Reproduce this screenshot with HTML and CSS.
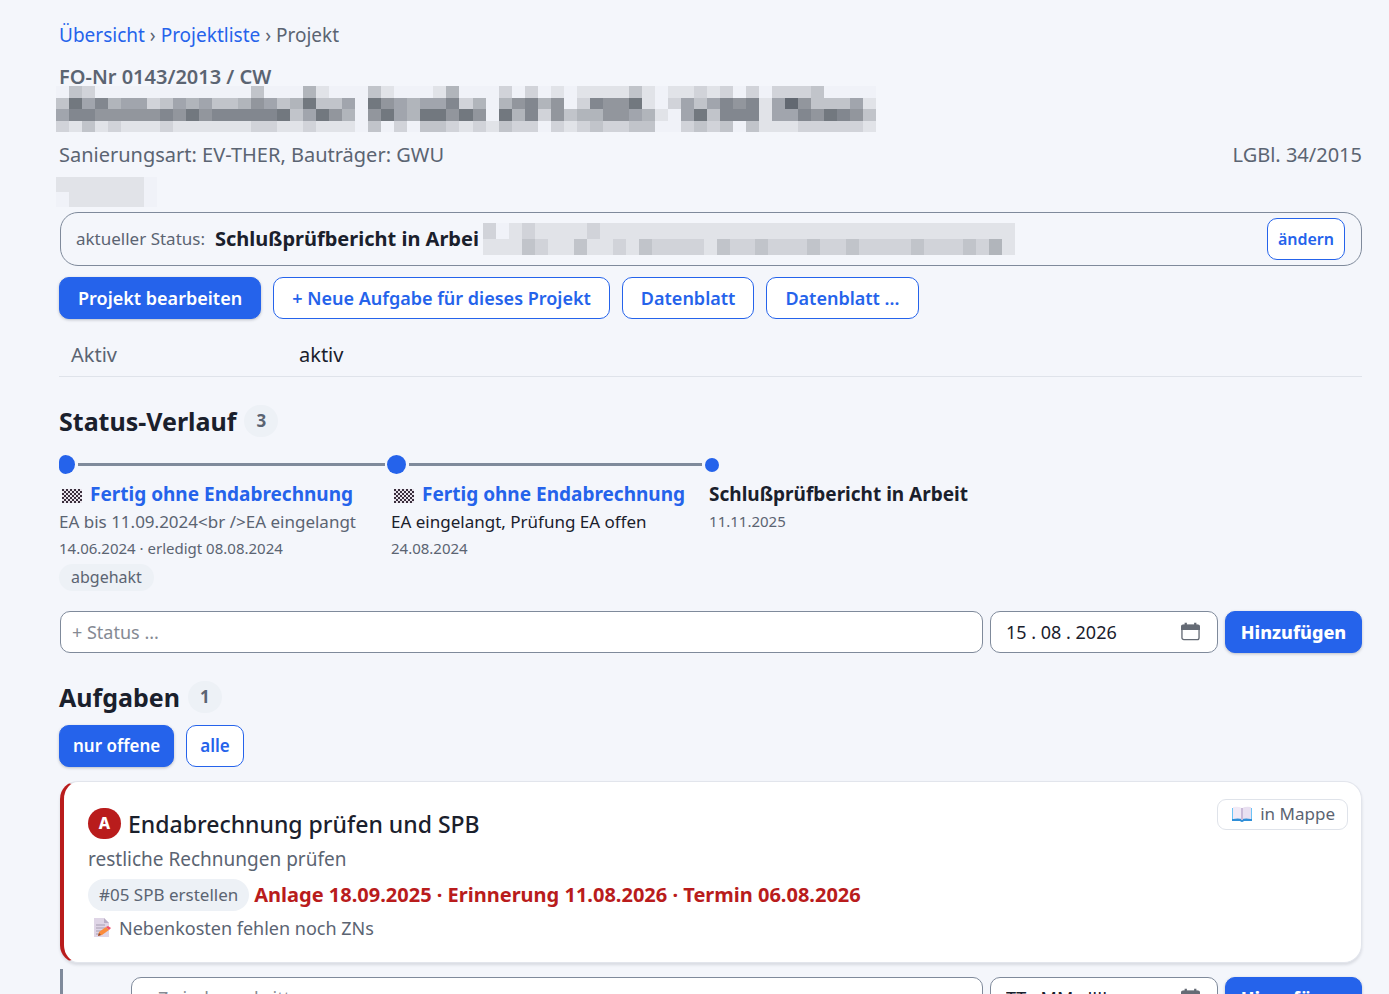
FILE: index.html
```html
<!DOCTYPE html>
<html lang="de">
<head>
  <meta charset="UTF-8">
  <meta name="viewport" content="width=device-width, initial-scale=1.0">
  <title>Projekt</title>
  <link rel="stylesheet" href="styles.css">
</head>
<body>
<main class="page">

  <nav class="breadcrumb">
    <a href="#">Übersicht</a> › <a href="#">Projektliste</a> › <span>Projekt</span>
  </nav>

  <!-- Projektkopf -->
  <header class="project-head">
    <div class="fo-nr">FO-Nr 0143/2013 / CW</div>
    <svg class="mask mask-title" data-rows="032000000000000300041000310001400020201011113101121202022230000 385745523545334653483350865455724046746027668102535767159633351 577666667686777778358640685488686084726344665410583777155768763 213121112111111221121110302033212132202123223300232303111222221"></svg>
    <div class="meta">
      <span>Sanierungsart: EV-THER, Bauträger: GWU</span>
      <span>LGBl. 34/2015</span>
    </div>
    <svg class="mask mask-short" data-rows="11111110 01111110"></svg>
  </header>

  <!-- Aktueller Status -->
  <section class="status-box">
    <span class="status-label">aktueller Status:</span>
    <strong class="status-text">Schlußprüfbericht in Arbei</strong>
    <svg class="mask mask-status" data-rows="20121111211111111111111111111111111111111 11132113112132222132232223223222232223241"></svg>
    <button class="btn btn-small" type="button">ändern</button>
  </section>

  <div class="actions">
    <button class="btn btn-primary" type="button">Projekt bearbeiten</button>
    <button class="btn" type="button">+ Neue Aufgabe für dieses Projekt</button>
    <button class="btn" type="button">Datenblatt</button>
    <button class="btn" type="button">Datenblatt ...</button>
  </div>

  <table class="facts">
    <tr><th>Aktiv</th><td>aktiv</td></tr>
  </table>

  <!-- Status-Verlauf -->
  <section>
    <h2>Status-Verlauf <span class="count">3</span></h2>
    <ol class="timeline">
      <li class="step step-first">
        <div class="track"><i class="dot"></i></div>
        <a class="step-title" href="#"><svg class="flag" viewBox="0 0 20 14"><use href="#checker"/></svg>Fertig ohne Endabrechnung</a>
        <div class="step-note muted">EA bis 11.09.2024&lt;br /&gt;EA eingelangt</div>
        <div class="step-date">14.06.2024 · erledigt 08.08.2024</div>
        <span class="tag">abgehakt</span>
      </li>
      <li class="step">
        <div class="track"><i class="dot"></i></div>
        <a class="step-title" href="#"><svg class="flag" viewBox="0 0 20 14"><use href="#checker"/></svg>Fertig ohne Endabrechnung</a>
        <div class="step-note">EA eingelangt, Prüfung EA offen</div>
        <div class="step-date">24.08.2024</div>
      </li>
      <li class="step step-last">
        <div class="track"><i class="dot"></i></div>
        <div class="step-title">Schlußprüfbericht in Arbeit</div>
        <div class="step-date">11.11.2025</div>
      </li>
    </ol>

    <form class="add-row">
      <input class="field" type="text" aria-label="Status" placeholder="+ Status ...">
      <label class="date-field">
        <input type="text" aria-label="Datum" value="15 . 08 . 2026">
        <svg viewBox="0 0 20 20"><use href="#calendar"/></svg>
      </label>
      <button class="btn btn-primary btn-add" type="button">Hinzufügen</button>
    </form>
  </section>

  <!-- Aufgaben -->
  <section>
    <h2>Aufgaben <span class="count">1</span></h2>
    <div class="filters">
      <button class="btn btn-primary" type="button">nur offene</button>
      <button class="btn" type="button">alle</button>
    </div>

    <article class="task">
      <div class="task-body">
        <h3><span class="prio">A</span>Endabrechnung prüfen und SPB</h3>
        <p class="task-text">restliche Rechnungen prüfen</p>
        <p class="task-dates"><span class="tag tag-large">#05 SPB erstellen</span><strong>Anlage 18.09.2025 · Erinnerung 11.08.2026 · Termin 06.08.2026</strong></p>
        <p class="task-memo">
          <svg viewBox="0 0 18 20">
            <path d="M1 0h10l5 5v14H1z" fill="#dfd5e6"/>
            <path d="M11 0l5 5h-5z" fill="#b9adc4"/>
            <path d="M3 7h9M3 10h9M3 13h7M3 16h3" stroke="#a79eb2"/>
            <path d="M5 18l1-4 7-5 3 3-7 5z" fill="#fb8c3c"/>
            <path d="M13 9l2-1 3 2-2 2z" fill="#f0506a"/>
            <path d="M5 18l1-3 2 2z" fill="#8a4b3a"/>
          </svg>
          Nebenkosten fehlen noch ZNs
        </p>
      </div>
      <button class="folder" type="button">
        <svg viewBox="0 0 20 16">
          <path d="M0 2h20v13h-8q-2 2-4 0H0z" fill="#2f8fd8"/>
          <path d="M0 2h2v11H0zM18 2h2v11h-2z" fill="#6cc3f5"/>
          <path d="M1 1q5-1 9 1v11q-4-1-9 0z" fill="#f1eaf6"/>
          <path d="M19 1q-5-1-9 1v11q4-1 9 0z" fill="#e9e0f1"/>
          <path d="M10 2v12" stroke="#c9bad8" stroke-width="2"/>
        </svg>
        in Mappe
      </button>
    </article>

    <form class="add-row subtask">
      <input class="field" type="text" aria-label="Zwischenschritt" placeholder="+ Zwischenschritt ...">
      <label class="date-field">
        <input type="text" aria-label="Datum" value="TT . MM . JJJJ">
        <svg viewBox="0 0 20 20"><use href="#calendar"/></svg>
      </label>
      <button class="btn btn-primary btn-add" type="button">Hinzufügen</button>
    </form>
  </section>
</main>

<svg class="sprite">
  <defs>
    <pattern id="check" width="4" height="4" patternUnits="userSpaceOnUse">
      <rect width="4" height="4" fill="#e9e4ec"/>
      <rect width="2" height="2" fill="#3a2f3d"/>
      <rect x="2" y="2" width="2" height="2" fill="#3a2f3d"/>
    </pattern>
    <symbol id="checker" viewBox="0 0 20 14">
      <rect width="20" height="14" fill="url(#check)"/>
    </symbol>
    <symbol id="calendar" viewBox="0 0 20 20">
      <rect x="1" y="3" width="18" height="15" rx="2" fill="none" stroke="#656b75" stroke-width="1.4"/>
      <path d="M2 2h16q2 0 2 2v4H0V4q0-2 2-2z" fill="#656b75"/>
      <path d="M5 0v4M15 0v4" stroke="#656b75" stroke-width="2.4"/>
    </symbol>
  </defs>
</svg>

<script>
  // Unkenntlich gemachte Felder: eine Ziffer pro Block, 0 = leer, 9 = dunkel
  document.querySelectorAll('.mask').forEach(function (svg) {
    const rows = svg.dataset.rows.split(' ');
    svg.setAttribute('viewBox', '0 0 ' + rows[0].length + ' ' + rows.length);
    svg.setAttribute('preserveAspectRatio', 'none');
    rows.forEach(function (row, y) {
      [...row].forEach(function (level, x) {
        const rect = document.createElementNS('http://www.w3.org/2000/svg', 'rect');
        rect.setAttribute('x', x);
        rect.setAttribute('y', y);
        rect.setAttribute('width', 1);
        rect.setAttribute('height', 1);
        rect.setAttribute('fill-opacity', Number(level) * 0.09 + 0.02);
        svg.appendChild(rect);
      });
    });
  });
</script>
</body>
</html>
```
FILE: styles.css
```css
* {
  box-sizing: border-box;
}

body {
  margin: 0;
  height: 100vh;
  overflow: hidden;
  background: #f4f6fb;
  color: #1a202c;
  font-family: "Segoe UI", "Noto Sans", sans-serif;
  font-size: 19px;
  line-height: 28px;
}

a {
  color: #2563eb;
  text-decoration: none;
}

p, h2, h3, ol {
  margin: 0;
  padding: 0;
}

button, input {
  font: inherit;
}

.page {
  padding: 21px 27px 0 59px;
}

.sprite {
  position: absolute;
  width: 0;
  height: 0;
}

.muted {
  color: #5b6472;
}

.breadcrumb {
  color: #5b6472;
}

/* Projektkopf */
.project-head {
  display: flex;
  flex-direction: column;
  margin-top: 14px;
  color: #5b6472;
  font-size: 20px;
}

.fo-nr {
  height: 23px;
  font-weight: 600;
}

.meta {
  display: flex;
  justify-content: space-between;
  margin: 9px 0 8px;
}

.mask {
  display: block;
  flex: none;
  fill: #454b54;
  shape-rendering: crispEdges;
}

.mask-title {
  width: 820px;
  height: 46px;
  margin-left: -3px;
}

.mask-short {
  width: 101px;
  height: 30px;
  margin-left: -3px;
}

.mask-status {
  width: 532px;
  height: 32px;
}

/* Aktueller Status */
.status-box {
  display: flex;
  align-items: center;
  height: 54px;
  margin: 5px 0 0 1px;
  padding: 0 16px 0 15px;
  border: 1px solid #7f8a9b;
  border-radius: 18px;
}

.status-label {
  margin-right: 10px;
  color: #5b6472;
  font-size: 17px;
}

.status-text {
  margin-right: 4px;
  font-size: 20px;
}

/* Buttons */
.btn {
  height: 42px;
  padding: 0 18px;
  border: 1px solid #2563eb;
  border-radius: 10px;
  background: #fff;
  color: #2563eb;
  font-size: 18px;
  font-weight: 600;
  white-space: nowrap;
  cursor: pointer;
}

.btn-primary {
  background: #2563eb;
  color: #fff;
  box-shadow: 0 1px 3px rgba(16, 24, 40, 0.25);
}

.btn-small {
  margin-left: auto;
  padding: 0 10px;
  font-size: 16px;
}

.actions, .filters {
  display: flex;
  gap: 12px;
}

.actions {
  margin-top: 11px;
}

/* Stammdaten */
.facts {
  width: 100%;
  margin-top: 15px;
  border-collapse: collapse;
  font-size: 20px;
}

.facts th, .facts td {
  height: 42px;
  padding: 0 12px;
  border-bottom: 1px solid #dfe3ea;
  text-align: left;
}

.facts th {
  width: 228px;
  color: #5b6472;
  font-weight: 400;
}

h2 {
  display: flex;
  align-items: center;
  gap: 8px;
  margin-top: 28px;
  font-size: 25px;
  line-height: 32px;
}

.count {
  padding: 0 12px;
  border-radius: 16px;
  background: #edf1f6;
  color: #5b6472;
  font-size: 17px;
}

/* Status-Verlauf */
.timeline {
  display: flex;
  height: 168px;
  margin-bottom: 6px;
  list-style: none;
}

.step {
  display: flex;
  flex-direction: column;
  align-items: flex-start;
  padding-right: 24px;
  line-height: 27px;
}

.step-first {
  padding-right: 35px;
}

.track {
  display: flex;
  align-items: center;
  align-self: stretch;
  gap: 3px;
  height: 40px;
  margin: 8px -17px -4px -4px;
}

.track::after {
  content: "";
  flex: 1;
  height: 3px;
  background: #7f8a9b;
}

.step-last .track::after {
  display: none;
}

.dot {
  width: 19px;
  height: 19px;
  border-radius: 50%;
  background: #2563eb;
}

.step-first .track {
  margin-left: 0;
  margin-right: -29px;
}

.step-first .dot {
  width: 16px;
  border-radius: 7px 10px 10px 7px;
}

.step-last .dot {
  width: 14px;
  height: 14px;
}

.step-title {
  font-size: 19px;
  font-weight: 700;
}

.step-note {
  font-size: 17px;
}

.step-date {
  color: #5b6472;
  font-size: 15px;
  line-height: 26px;
}

.flag {
  width: 20px;
  height: 14px;
  margin: 0 8px -2px 3px;
}

.tag {
  padding: 0 12px;
  border-radius: 16px;
  background: #edf1f6;
  color: #5b6472;
  font-size: 16px;
}

.step .tag {
  margin-top: 3px;
}

/* Eingabezeilen */
.add-row {
  display: flex;
  gap: 7px;
  padding-left: 1px;
}

.field, .date-field {
  height: 42px;
  border: 1px solid #7f8a9b;
  border-radius: 10px;
  background: #fff;
  font-size: 18px;
}

.field {
  flex: 1;
  min-width: 0;
  padding: 0 11px;
}

.field::placeholder {
  color: #858a93;
}

.date-field {
  display: flex;
  align-items: center;
  width: 228px;
  padding: 0 17px 0 15px;
}

.date-field input {
  flex: 1;
  min-width: 0;
  padding: 0;
  border: 0;
  background: none;
  color: #1a202c;
}

.date-field svg {
  width: 19px;
  height: 20px;
}

.btn-add {
  width: 137px;
  padding: 0;
  font-weight: 800;
}

/* Aufgaben */
.filters {
  margin-top: 12px;
}

.filters .btn {
  padding: 0 13px;
  font-size: 17px;
}

.task {
  display: flex;
  align-items: flex-start;
  justify-content: space-between;
  margin: 14px 0 0 1px;
  padding: 17px 13px 19px 24px;
  border: 1px solid #e2e5ec;
  border-left: 4px solid #b91c1c;
  border-radius: 18px;
  background: #fff;
  box-shadow: 0 2px 3px rgba(16, 24, 40, 0.12);
}

.task-body {
  padding-top: 8px;
  color: #5b6472;
  font-size: 18px;
}

h3 {
  display: flex;
  align-items: center;
  gap: 7px;
  color: #1a202c;
  font-size: 23px;
  font-weight: 500;
  line-height: 34px;
}

.prio {
  width: 33px;
  border-radius: 16px;
  background: #b91c1c;
  color: #fff;
  font-size: 16px;
  font-weight: 800;
  line-height: 31px;
  text-align: center;
}

.task-text {
  font-size: 19px;
  line-height: 36px;
}

.task-dates {
  display: flex;
  align-items: center;
  gap: 5px;
  color: #b91c1c;
  font-size: 20px;
  line-height: 36px;
}

.tag-large {
  padding: 0 11px;
  font-size: 17px;
  line-height: 32px;
}

.task-memo {
  display: flex;
  align-items: center;
  gap: 8px;
  padding-left: 5px;
  line-height: 30px;
}

.task-memo svg {
  width: 18px;
  height: 20px;
}

.folder {
  display: flex;
  align-items: center;
  gap: 8px;
  height: 31px;
  padding: 0 12px 0 14px;
  border: 1px solid #dfe3ea;
  border-radius: 9px;
  background: #fff;
  color: #5b6472;
  font-size: 17px;
}

.folder svg {
  width: 20px;
  height: 16px;
}

.subtask {
  margin: 6px 0 0 1px;
  padding: 8px 0 12px 68px;
  border-left: 3px solid #7f8a9b;
}
```
